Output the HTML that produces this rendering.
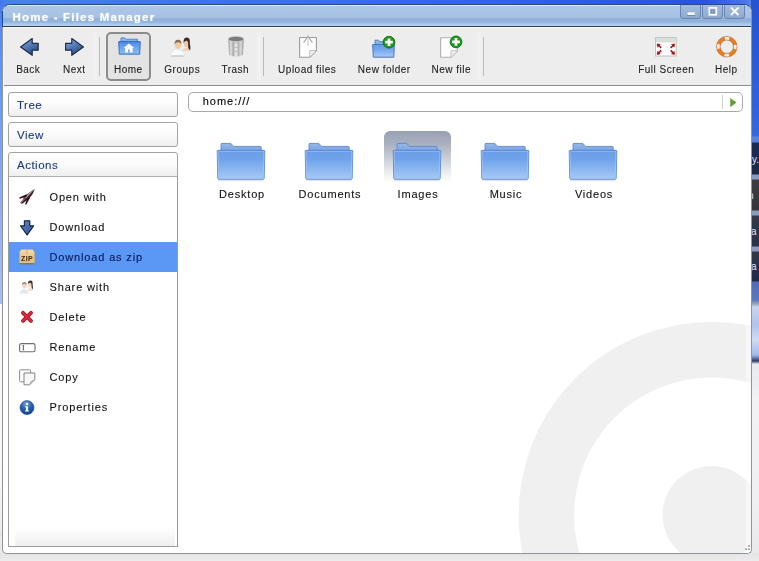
<!DOCTYPE html>
<html>
<head>
<meta charset="utf-8">
<title>Home - Files Manager</title>
<style>
*{box-sizing:border-box;margin:0;padding:0}
html,body{width:759px;height:561px;overflow:hidden}
body{font-family:"Liberation Sans",sans-serif;font-size:11px;color:#111;-webkit-text-stroke:0.1px currentColor;position:relative;background:#3a6ee0}
.abs{position:absolute}
/* desktop wallpaper pieces */
#wp-top{left:0;top:0;width:759px;height:30px;background:linear-gradient(90deg,#4782ea 0%,#3d74ea 25%,#3a6cee 45%,#3060e6 70%,#2a52de 93%,#4a74ea 98%,#6a90f0 100%)}
#wp-left{left:0;top:0;width:4px;height:561px;background:linear-gradient(180deg,#4079ea 0px,#4c82f0 14px,#5789f7 28px,#5a94f8 65px,#6fa0f4 120px,#88aaf0 186px,#9cb6f0 250px,#a9bdf0 296px,#a9bdf0 303.5px,#fafafa 304px,#f6f6f6 480px,#ececec 530px,#e2e2e2 534px,#eaeaea 538px,#e8e8e8 561px)}
#wp-right{left:751px;top:0;width:8px;height:561px;background:linear-gradient(180deg,#2454d2 0px,#2c5ed8 80px,#3468de 136px,#5a82dc 137px,#5a82dc 142px,#1c2c54 143px,#1a2848 174px,#8a9cc4 175px,#8a9cc4 179px,#3c3e44 180px,#34363c 210px,#8c9cc0 211px,#8c9cc0 215px,#34384a 216px,#2a3048 246px,#8c98c0 247px,#8c98c0 251px,#34384a 252px,#1e2a4c 281px,#4c6cb8 282px,#5878c0 300px,#8a98b4 303px,#c8d4f0 307px,#b0c4f0 325px,#d0dcf6 340px,#a0b8ec 355px,#2a3a6a 361px,#e8eaf0 364px,#f2f2f4 400px,#f0f0f2 500px,#e8e8ea 561px)}
#wp-bottom{left:0;top:553px;width:759px;height:8px;background:linear-gradient(180deg,#e4e4e4,#ececec)}

/* window */
#win{left:2px;top:4px;width:750px;height:550px;border:1px solid #8e9499;border-top-color:#2c4a86;border-radius:8px 8px 5px 5px;background:#fff;overflow:hidden}
#in{left:1px;top:0;width:747px;height:548px;will-change:transform}
#title{left:-1px;top:0;width:748px;height:22px;background:linear-gradient(180deg,#d2effc 0px,#d2effc 1px,#abc6e6 1.5px,#a7c2e4 11px,#a4c0e4 12.5px,#92b2da 13.5px,#90b0d9 16px,#98b9e0 17.5px,#a9c9ec 19px,#b7d3f1 21px);border-bottom:1px solid #2c3f60}
#title .t{left:9.5px;top:6px;color:#fff;font-weight:bold;font-size:11.5px;letter-spacing:1.2px;white-space:nowrap;text-shadow:0 0 2px rgba(255,255,255,.45)}
.wb{top:0;height:14px;width:21px;background:linear-gradient(180deg,#a2bbdb 0,#9ab3d5 50%,#8faacf 100%);border:1px solid #6786b2;border-top:none;border-radius:0 0 3.5px 3.5px}
.wb svg{position:absolute;left:0;top:0}
#toolbar{left:0;top:23px;width:747px;box-shadow:-1px 0 0 #f6f4f4;height:58px;background:#ededed;border-bottom:1px solid #8c8c8c}
.tb{top:0;height:58px;text-align:center;white-space:nowrap;font-size:10px;letter-spacing:.5px;color:#222}
.tb span{position:absolute;left:-21.5px;right:-20px;top:35px;line-height:13px}
.sep{top:9px;width:1px;height:39px;background:#bcbcbc}
.sep::before{content:"";position:absolute;left:-6px;top:-5px;width:4px;height:48px;background:#f1f1f1}
#homebtn{left:102px;top:4px;width:44.5px;height:49px;border:2px solid #8b8b8b;border-radius:5px;background:#e3e3e3}

/* sidebar */
.panel{left:4px;width:170px;border:1px solid #a2a2a2;border-radius:3px;background:linear-gradient(180deg,#ffffff 0,#fbfbfb 50%,#efefef 100%)}
.panel .h{position:absolute;left:8px;top:6px;color:#1b3a7c;font-size:11.5px;letter-spacing:.5px;line-height:13px}
#actions-body{left:4px;top:171px;width:170px;height:371px;border:1px solid #9a9a9a;border-top-color:#b0b0b0;background:#fff}
#actions-body .fade{left:6px;top:350px;width:160px;height:19px;background:linear-gradient(180deg,#fff 0,#f7f7f7 50%,#efefef 100%)}
.row{left:0;width:168px;height:30px;font-size:11px;letter-spacing:.85px;color:#111}
.row .lbl{position:absolute;left:40.5px;top:9px;line-height:13px;white-space:nowrap}
.row svg{position:absolute;left:10px;top:7px}
.row.sel{background:#5b98f6}
.row.sel .lbl{color:#0a1656}

/* content */
#addr{left:184px;top:87px;width:555px;height:20px;border:1px solid #a8a8a8;border-radius:5px;background:#fff}
#addr .t{left:13.7px;top:2px;font-size:11px;letter-spacing:1px;color:#000;line-height:13px}
#addr .go{right:0;top:2px;width:20px;height:14px;border-left:1px solid #cfcfcf}
.folder{width:48px;height:38px}
.flabel{width:88px;text-align:center;font-size:11px;letter-spacing:.8px;color:#111;line-height:13px;white-space:nowrap}
#selbg{left:379.7px;top:125.5px;width:67.5px;height:52px;border-radius:6px 6px 0 0;background:linear-gradient(180deg,#98a1b4 0,#a9b0c0 25%,#cdd1d9 55%,#f1f2f4 85%,#fff 100%)}
</style>
</head>
<body>
<div id="wp-top" class="abs"></div>
<div id="wp-left" class="abs"></div>
<div id="wp-right" class="abs"></div>
<div id="wp-bottom" class="abs"></div>
<div class="abs" style="left:752px;top:0;width:7px;height:561px;overflow:hidden;color:#d8def2;font-size:10px;line-height:10px">
  <span class="abs" style="left:0;top:155px">y.</span>
  <span class="abs" style="left:-4px;top:191px">n</span>
  <span class="abs" style="left:-1px;top:227px">a</span>
  <span class="abs" style="left:-1px;top:262px">a</span>
</div>

<div id="win" class="abs">
<div id="in" class="abs">
  <!-- watermark circles -->
  <svg class="abs" style="left:0;top:81px" width="747" height="467" viewBox="0 0 747 467">
    <circle cx="707.6" cy="429" r="165.25" fill="none" stroke="#f0f0f0" stroke-width="55.5"/>
    <circle cx="707.6" cy="429" r="49" fill="#f0f0f0"/>
    <rect x="742" y="0" width="5" height="467" fill="#fff" opacity="0.45"/>
    <g fill="#8e8e8e"><rect x="744.2" y="459.2" width="1.6" height="1.6"/><rect x="741.4" y="462.4" width="1.6" height="1.6"/><rect x="744.2" y="462.4" width="1.6" height="1.6"/></g>
  </svg>

  <div id="title" class="abs">
    <div class="t abs">Home - Files Manager</div>
    <div class="wb abs" style="left:677px"><svg width="19" height="13" viewBox="0 0 19 13"><path d="M6 9.2 L14 9.2" stroke="#6f8db6" stroke-width="3.6"/><path d="M6.4 8.6 L13.8 8.6" stroke="#fff" stroke-width="2.6"/></svg></div>
    <div class="wb abs" style="left:699px"><svg width="19" height="13" viewBox="0 0 19 13"><rect x="6.3" y="2.9" width="7" height="6.9" fill="#8fa9cc" stroke="#fff" stroke-width="1.6"/><rect x="8.3" y="5.2" width="3" height="2.4" fill="none" stroke="#7190ba" stroke-width="0.8"/></svg></div>
    <div class="wb abs" style="left:721px"><svg width="19" height="13" viewBox="0 0 19 13"><path d="M6 2.6 L13.4 10 M13.4 2.6 L6 10" stroke="#fff" stroke-width="1.9"/></svg></div>
  </div>

  <div id="toolbar" class="abs">
    <!-- Back -->
    <svg class="abs" style="left:13px;top:8px" width="28" height="24" viewBox="0 0 28 24">
      <defs><linearGradient id="ga" x1="0" y1="0" x2="0.6" y2="1"><stop offset="0" stop-color="#9dbbe0"/><stop offset="0.45" stop-color="#5a82bc"/><stop offset="1" stop-color="#2b4a80"/></linearGradient></defs>
      <path d="M3.6 10.9 L15.2 2.6 L15.2 7.3 L21.2 7.3 L21.2 14.2 L15.2 14.2 L15.2 19.3 Z" fill="url(#ga)" stroke="#1d2d4d" stroke-width="1.2" stroke-linejoin="round"/>
    </svg>
    <div class="tb abs" style="left:8px;width:34px"><span>Back</span></div>
    <!-- Next -->
    <svg class="abs" style="left:59px;top:8px" width="28" height="24" viewBox="0 0 28 24">
      <path d="M20.4 10.9 L8.8 2.6 L8.8 7.3 L2.6 7.3 L2.6 14.2 L8.8 14.2 L8.8 19.3 Z" fill="url(#ga)" stroke="#1d2d4d" stroke-width="1.2" stroke-linejoin="round"/>
    </svg>
    <div class="tb abs" style="left:54px;width:34px"><span>Next</span></div>
    <div class="sep abs" style="left:95px"></div>
    <!-- Home -->
    <div id="homebtn" class="abs"></div>
    <svg class="abs" style="left:112.5px;top:9px" width="26" height="20" viewBox="0 0 26 20">
      <defs>
        <linearGradient id="gh" x1="0" y1="0" x2="0" y2="1"><stop offset="0" stop-color="#4685e4"/><stop offset="0.25" stop-color="#5f9aec"/><stop offset="1" stop-color="#8cbcf5"/></linearGradient>
        <linearGradient id="ghb" x1="0" y1="0" x2="0" y2="1"><stop offset="0" stop-color="#9cc0ee"/><stop offset="1" stop-color="#6d9fe2"/></linearGradient>
      </defs>
      <path d="M4 6 L4 0.9 L7.6 0.9 L9.2 2.2 L20.4 2.2 L20.4 6 Z" fill="url(#ghb)" stroke="#4a78c4" stroke-width="0.9"/>
      <path d="M1.7 4.6 L23.3 4.6 L22.7 17.2 L2.3 17.2 Z" fill="url(#gh)" stroke="#3366c0" stroke-width="0.9" stroke-linejoin="round"/>
      <path d="M11.9 6.6 L6.6 10.9 L8.2 10.9 L8.2 15.4 L11 15.4 L11 12.6 L12.8 12.6 L12.8 15.4 L15.6 15.4 L15.6 10.9 L17.2 10.9 Z" fill="#fff"/>
    </svg>
    <div class="tb abs" style="left:108px;width:34px"><span>Home</span></div>
    <!-- Groups -->
    <svg class="abs" style="left:164px;top:6.5px" width="28" height="24" viewBox="0 0 28 24">
      <path d="M2.5 21 Q3 15 9.5 14.2 Q16 15 16.5 21 Z" fill="#fbfbfd" stroke="#dcdce4" stroke-width="0.6"/>
      <path d="M3.4 21 L15.6 21" stroke="#b4b8c6" stroke-width="0.9"/>
      <ellipse cx="10" cy="9.8" rx="3.2" ry="4" fill="#f1c9a2"/>
      <path d="M6.6 9.4 Q6.2 4.8 10 4.7 Q13.8 4.9 13.4 9 Q12.2 7 10 7.2 Q7.6 7.2 6.6 9.4 Z" fill="#8a6a4e"/>
      <path d="M14.5 16 Q16 12.6 18.5 12.8 Q21.4 13 22.2 16 Z" fill="#f2d2b6"/>
      <ellipse cx="18.5" cy="8.4" rx="2.7" ry="3.6" fill="#efc8a4"/>
      <path d="M15.6 8 Q15.2 2.6 19 2.6 Q22.4 3 21.8 8 Q22.8 12 22.2 15 Q19.8 14.4 20.2 10 Q20.6 6.6 18.6 5.6 Q16.6 5.8 15.6 8 Z" fill="#3a2a22"/>
    </svg>
    <div class="tb abs" style="left:161px;width:36px"><span>Groups</span></div>
    <!-- Trash -->
    <svg class="abs" style="left:220.8px;top:6.2px" width="22" height="24" viewBox="0 0 22 24">
      <defs><linearGradient id="gt" x1="0" y1="0" x2="1" y2="0"><stop offset="0" stop-color="#9a9a9a"/><stop offset="0.18" stop-color="#e2e2e2"/><stop offset="0.32" stop-color="#a8a8a8"/><stop offset="0.5" stop-color="#f0f0f0"/><stop offset="0.66" stop-color="#b4b4b4"/><stop offset="0.82" stop-color="#dcdcdc"/><stop offset="1" stop-color="#8e8e8e"/></linearGradient></defs>
      <path d="M3.3 5 L4 21 Q11 24 18 21 L18.7 5 Z" fill="url(#gt)"/>
      <ellipse cx="11" cy="5" rx="7.8" ry="2.6" fill="#7a7a7a" stroke="#c4c4c4" stroke-width="0.9"/>
      <path d="M9.5 9 L12.5 9 M9.5 13.5 L12.5 13.5 M9.5 17.5 L12.5 17.5" stroke="#bdbdbd" stroke-width="1"/>
    </svg>
    <div class="tb abs" style="left:214px;width:36px"><span>Trash</span></div>
    <div class="sep abs" style="left:259px"></div>
    <!-- Upload files -->
    <svg class="abs" style="left:293px;top:5.7px" width="22" height="24" viewBox="0 0 22 24">
      <path d="M2.6 3.5 L19.4 3.5 L19.4 16.5 L12.8 23.3 L2.6 23.3 Z" fill="#fdfdfd" stroke="#9c9c9c" stroke-width="1.1" stroke-linejoin="round"/>
      <path d="M12.8 23 L12.8 16.6 L19.2 16.6" fill="#f2f2f2" stroke="#b4b4b4" stroke-width="0.9"/>
      <path d="M6.6 8.6 L11 2.2 L15.4 8.6" fill="#fff" stroke="#a6a6a6" stroke-width="1.1"/>
      <path d="M11 3 L11 12" stroke="#c4c4c4" stroke-width="1"/>
    </svg>
    <div class="tb abs" style="left:274px;width:60px"><span>Upload files</span></div>
    <!-- New folder -->
    <svg class="abs" style="left:365.2px;top:6px" width="30" height="26" viewBox="0 0 30 26">
      <path d="M6 12 L6 6.2 L9.5 6.2 L11 7.6 L24 7.6 L24 12 Z" fill="url(#ghb)" stroke="#5682c6" stroke-width="1"/>
      <path d="M3.6 10.5 L25.4 10.5 L24.8 23.2 L4.3 23.2 Z" fill="url(#gfront)" stroke="#4d78bc" stroke-width="1" stroke-linejoin="round"/>
      <circle cx="20" cy="8.2" r="5.9" fill="#1f9a1f" stroke="#0d6d12" stroke-width="0.9"/>
      <path d="M20 4.4 L20 12 M16.2 8.2 L23.8 8.2" stroke="#fff" stroke-width="2.7"/>
    </svg>
    <div class="tb abs" style="left:354px;width:54px"><span>New folder</span></div>
    <!-- New file -->
    <svg class="abs" style="left:432.8px;top:5.8px" width="30" height="26" viewBox="0 0 30 26">
      <path d="M3.6 3.8 L20.4 3.8 L20.4 16.8 L14 23.3 L3.6 23.3 Z" fill="#fcfcfc" stroke="#b2b2b2" stroke-width="1.1" stroke-linejoin="round"/>
      <path d="M14 23 L14 16.8 L20.2 16.8" fill="#f0f0f0" stroke="#bcbcbc" stroke-width="0.9"/>
      <circle cx="19" cy="7.9" r="5.9" fill="#1f9a1f" stroke="#0d6d12" stroke-width="0.9"/>
      <path d="M19 4.1 L19 11.7 M15.2 7.9 L22.8 7.9" stroke="#fff" stroke-width="2.7"/>
    </svg>
    <div class="tb abs" style="left:428px;width:40px"><span>New file</span></div>
    <div class="sep abs" style="left:479px"></div>
    <!-- Full Screen -->
    <svg class="abs" style="left:649.1px;top:7px" width="26" height="24" viewBox="0 0 26 24">
      <rect x="2.6" y="2.6" width="20.6" height="18.4" fill="#fff" stroke="#b9c0bd" stroke-width="1"/>
      <rect x="3.1" y="3.1" width="19.6" height="4.4" fill="#d9dedc"/>
      <g stroke="#a3121f" stroke-width="1.6" fill="#a3121f">
        <path d="M8.2 13 L4.6 9.4"/><path d="M4 8.8 L7.4 9.4 L4.6 12.2 Z" stroke-width="0.4"/>
        <path d="M17.6 13 L21.2 9.4"/><path d="M21.8 8.8 L18.4 9.4 L21.2 12.2 Z" stroke-width="0.4"/>
        <path d="M8.2 15.4 L4.6 19"/><path d="M4 19.6 L7.4 19 L4.6 16.2 Z" stroke-width="0.4"/>
        <path d="M17.6 15.4 L21.2 19"/><path d="M21.8 19.6 L18.4 19 L21.2 16.2 Z" stroke-width="0.4"/>
      </g>
    </svg>
    <div class="tb abs" style="left:634px;width:58px"><span>Full Screen</span></div>
    <!-- Help -->
    <svg class="abs" style="left:710px;top:6px" width="26" height="26" viewBox="0 0 26 26">
      <circle cx="12.8" cy="12.7" r="8.5" fill="none" stroke="#ee7d1a" stroke-width="3.6"/>
      <circle cx="12.8" cy="12.7" r="8.5" fill="none" stroke="#f7efe8" stroke-width="3.6" stroke-dasharray="4.6 8.75" stroke-dashoffset="2.3"/>
      <circle cx="12.8" cy="12.7" r="10.3" fill="none" stroke="#9c5a28" stroke-width="0.55"/>
      <circle cx="12.8" cy="12.7" r="6.7" fill="none" stroke="#9c5a28" stroke-width="0.55"/>
    </svg>
    <div class="tb abs" style="left:706px;width:34px"><span>Help</span></div>
  </div>

  <!-- sidebar -->
  <div class="panel abs" style="top:87px;height:25px"><div class="h">Tree</div></div>
  <div class="panel abs" style="top:117px;height:25px"><div class="h">View</div></div>
  <div class="panel abs" style="top:147px;height:25px;border-radius:3px 3px 0 0"><div class="h">Actions</div></div>
  <div id="actions-body" class="abs"><div class="fade abs"></div>
    <div class="row abs" style="top:5px">
      <svg width="18" height="18" viewBox="0 0 18 18">
        <path d="M15.8 0 Q14.2 5.4 10.2 9.6 L3.2 14.7 L1.1 13.9 L5.4 8.3 Q9.8 3.2 15.8 0 Z" fill="#3a1a22"/>
        <path d="M15.4 0.4 Q10 3.2 5.6 8.2 L7.2 9.2 Q11.4 4.4 15.4 0.4 Z" fill="#b7a3ab"/>
        <path d="M8.8 4.8 L0.2 8.4 L0.6 9.8 L7.2 8 Z" fill="#2a1218"/>
        <path d="M11.2 8.4 L7.4 15.6 L6 15.2 L8 10 Z" fill="#2a1218"/>
        <path d="M1.6 14 L6 9.4" stroke="#c9a0aa" stroke-width="1"/>
      </svg>
      <div class="lbl">Open with</div>
    </div>
    <div class="row abs" style="top:35px">
      <svg width="18" height="18" viewBox="0 0 18 18">
        <defs><linearGradient id="gd" x1="0" y1="0" x2="1" y2="1"><stop offset="0" stop-color="#5f82c0"/><stop offset="0.5" stop-color="#4a6cac"/><stop offset="1" stop-color="#2c4a86"/></linearGradient></defs>
        <path d="M5.4 1.8 L10.8 1.8 L10.8 6.8 L14.6 6.8 L8.1 16 L1.6 6.8 L5.4 6.8 Z" fill="url(#gd)" stroke="#17274a" stroke-width="1.2" stroke-linejoin="round"/>
      </svg>
      <div class="lbl">Download</div>
    </div>
    <div class="row sel abs" style="top:65px">
      <svg width="18" height="18" viewBox="0 0 18 18">
        <defs><linearGradient id="gz" x1="0" y1="0" x2="0" y2="1"><stop offset="0" stop-color="#f3dfb6"/><stop offset="0.45" stop-color="#e9c98f"/><stop offset="1" stop-color="#e2bd82"/></linearGradient></defs>
        <path d="M2.4 0.4 L13.6 0.4 L15.5 3 L15.5 14 Q15.5 14.8 14.7 14.8 L1.3 14.8 Q0.5 14.8 0.5 14 L0.5 3 Z" fill="url(#gz)" stroke="#c9a56a" stroke-width="0.6"/>
        <path d="M0.8 14.8 L15.2 14.8" stroke="#6a5f50" stroke-width="1"/>
        <path d="M8 0.6 L8 5.4" stroke="#d6bc88" stroke-width="1.6"/>
        <text x="8" y="11.8" text-anchor="middle" font-family="Liberation Sans, sans-serif" font-weight="bold" font-size="7" fill="#45280e" letter-spacing="0.3">ZIP</text>
      </svg>
      <div class="lbl">Download as zip</div>
    </div>
    <div class="row abs" style="top:95px">
      <svg width="18" height="18" viewBox="0 0 18 18">
        <path d="M0.8 14.6 Q1.2 10.6 5 10.2 Q9 10.6 9.4 14.6 Z" fill="#e4e4f0"/>
        <ellipse cx="5.4" cy="6.6" rx="2.3" ry="2.9" fill="#f3d9c0"/>
        <path d="M3 6.2 Q2.8 2.8 5.6 2.9 Q8 3.1 7.7 6 Q6.8 4.6 5.4 4.8 Q3.8 4.8 3 6.2 Z" fill="#9a8c82"/>
        <path d="M8.4 12 Q9 8.8 11.4 8.8 Q13.6 9 14 12 Z" fill="#f6e2cc"/>
        <ellipse cx="11.2" cy="5.4" rx="2" ry="2.8" fill="#f3d6b8"/>
        <path d="M9 5 Q8.8 1.4 11.6 1.5 Q14 1.8 13.6 5.4 Q14.2 8.4 13.8 10.6 Q12.2 10 12.6 7 Q12.8 4.4 11.4 3.8 Q9.8 3.8 9 5 Z" fill="#3c2c24"/>
      </svg>
      <div class="lbl">Share with</div>
    </div>
    <div class="row abs" style="top:125px">
      <svg width="18" height="18" viewBox="0 0 18 18">
        <path d="M4 3.8 L12 11.8 M12 3.8 L4 11.8" stroke="#a01222" stroke-width="3.8" stroke-linecap="round"/>
        <path d="M4 3.8 L12 11.8 M12 3.8 L4 11.8" stroke="#d62a3c" stroke-width="2.4" stroke-linecap="round"/>
      </svg>
      <div class="lbl">Delete</div>
    </div>
    <div class="row abs" style="top:155px">
      <svg width="18" height="18" viewBox="0 0 18 18">
        <rect x="0.6" y="4.6" width="15.4" height="8.2" rx="1.6" fill="#fff" stroke="#6e6e6e" stroke-width="1.1"/>
        <path d="M4.4 6.6 L4.4 10.8 M3.6 6.6 L5.2 6.6 M3.6 10.8 L5.2 10.8" stroke="#555" stroke-width="0.9"/>
      </svg>
      <div class="lbl">Rename</div>
    </div>
    <div class="row abs" style="top:185px">
      <svg width="18" height="18" viewBox="0 0 18 18">
        <rect x="0.6" y="0.8" width="11" height="12" rx="1.2" fill="#fdfdfd" stroke="#8c8c8c" stroke-width="1"/>
        <path d="M5 4 L15.8 4 L15.8 10.6 L10.6 15.8 L5 15.8 Z" fill="#f7f7f7" stroke="#858585" stroke-width="1" stroke-linejoin="round"/>
        <path d="M10.6 15.6 Q11.4 11.6 15.6 10.8" fill="none" stroke="#9a9a9a" stroke-width="0.9"/>
      </svg>
      <div class="lbl">Copy</div>
    </div>
    <div class="row abs" style="top:215px">
      <svg width="18" height="18" viewBox="0 0 18 18">
        <defs><radialGradient id="gi" cx="0.45" cy="0.25" r="0.8"><stop offset="0" stop-color="#7aa6dc"/><stop offset="0.45" stop-color="#2d62b4"/><stop offset="1" stop-color="#123a86"/></radialGradient></defs>
        <circle cx="8" cy="8.6" r="7" fill="url(#gi)" stroke="#16418c" stroke-width="0.6"/>
        <circle cx="8" cy="5" r="1.25" fill="#fff"/>
        <path d="M6.2 7.2 L9 7.2 L9 11.4 L10 11.4 L10 12.4 L6 12.4 L6 11.4 L7 11.4 L7 8.2 L6.2 8.2 Z" fill="#f4fbff"/>
      </svg>
      <div class="lbl">Properties</div>
    </div>
  </div>

  <!-- content -->
  <div id="addr" class="abs"><div class="t abs">home:///</div><div class="go abs"><svg style="position:absolute;left:7px;top:2.6px" width="8" height="10" viewBox="0 0 8 10"><path d="M0.5 0.5 L6.2 4.6 L0.5 8.7 Z" fill="#5ba22d" stroke="#4a9422" stroke-width="0.4"/></svg></div></div>
  <div id="selbg" class="abs"></div>
  <svg width="0" height="0" style="position:absolute">
    <defs>
      <linearGradient id="gfront" x1="0" y1="0" x2="0" y2="1"><stop offset="0" stop-color="#5c90de"/><stop offset="0.08" stop-color="#6a9fe8"/><stop offset="0.3" stop-color="#6ea3ea"/><stop offset="1" stop-color="#a7caf4"/></linearGradient>
      <linearGradient id="gback" x1="0" y1="0" x2="0" y2="1"><stop offset="0" stop-color="#96b8ea"/><stop offset="1" stop-color="#7aa4e2"/></linearGradient>
      <symbol id="folder" viewBox="0 0 50 40">
        <path d="M5 9 L5 2.4 Q5 1.4 6 1.4 L14 1.4 Q15 1.4 15.6 2.2 L17.6 4.4 L44.4 4.4 Q45.2 4.4 45.2 5.2 L45.2 9 Z" fill="url(#gback)" stroke="#5f88cc" stroke-width="0.9"/>
        <path d="M1.2 9 Q1.2 8.3 2 8.3 L48 8.3 Q48.8 8.3 48.8 9 L48.2 36.2 Q48.2 37.2 47.2 37.2 L2.8 37.2 Q1.8 37.2 1.8 36.2 Z" fill="url(#gfront)" stroke="#5a88d0" stroke-width="0.9"/>
        <path d="M2.1 9.4 L47.9 9.4 L47.3 36.2 L2.7 36.2 Z" fill="none" stroke="#a3c8f8" stroke-width="0.9" opacity="0.75"/>
        <path d="M2.4 37.9 L47.6 37.9" stroke="#7b9cc8" stroke-width="1" opacity="0.7"/>
      </symbol>
    </defs>
  </svg>
  <svg class="abs" style="left:212px;top:137.2px" width="50" height="40"><use href="#folder"/></svg>
  <svg class="abs" style="left:300px;top:137.2px" width="50" height="40"><use href="#folder"/></svg>
  <svg class="abs" style="left:388px;top:137.2px" width="50" height="40"><use href="#folder"/></svg>
  <svg class="abs" style="left:476px;top:137.2px" width="50" height="40"><use href="#folder"/></svg>
  <svg class="abs" style="left:564px;top:137.2px" width="50" height="40"><use href="#folder"/></svg>
  <div class="flabel abs" style="left:194px;top:183px">Desktop</div>
  <div class="flabel abs" style="left:282px;top:183px">Documents</div>
  <div class="flabel abs" style="left:370px;top:183px">Images</div>
  <div class="flabel abs" style="left:458px;top:183px">Music</div>
  <div class="flabel abs" style="left:546px;top:183px">Videos</div>

</div>
</div>
<div class="abs" style="left:2px;top:11px;width:1px;height:16px;background:#1d4a8c"></div>
</body>
</html>
